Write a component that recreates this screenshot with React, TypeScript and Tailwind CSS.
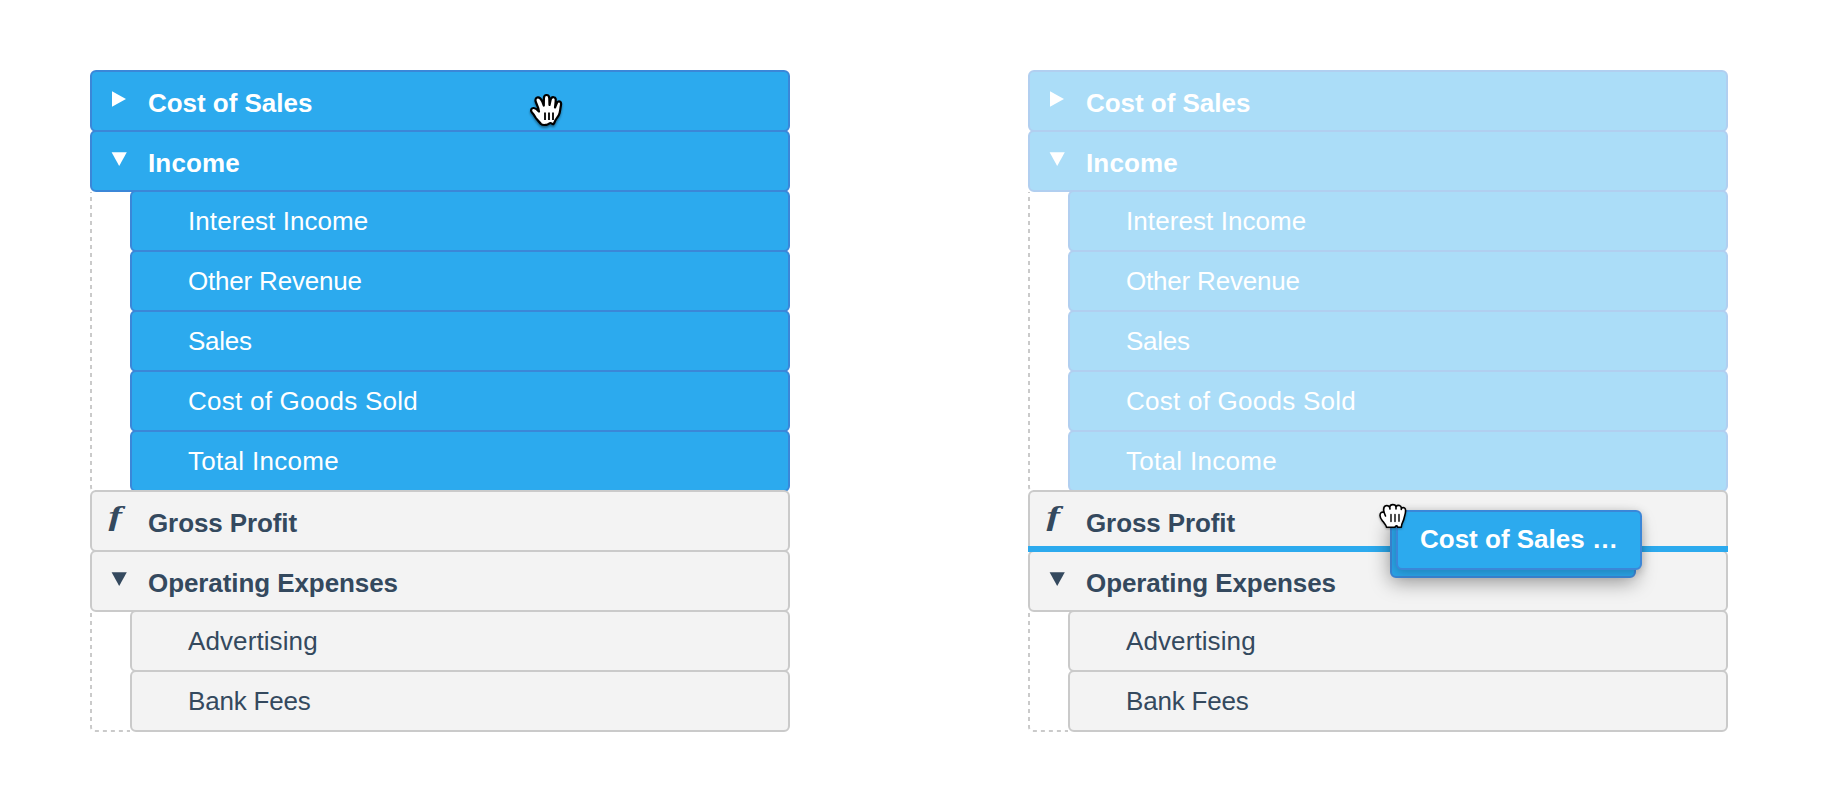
import React from "react";

type Tone = "selected" | "ghost" | "plain";
type Icon = "closed" | "open" | "formula";
type Label = { text: string; tracking: string };
type Item = { label: Label; icon: Icon; selected?: boolean; dashOffset?: number; children?: Label[] };

const ITEMS: Item[] = [
  { label: { text: "Cost of Sales", tracking: "tracking-[-0.03px]" }, icon: "closed", selected: true },
  {
    label: { text: "Income", tracking: "tracking-[0.15px]" },
    icon: "open",
    selected: true,
    dashOffset: 3,
    children: [
      { text: "Interest Income", tracking: "tracking-[0.08px]" },
      { text: "Other Revenue", tracking: "tracking-[-0.2px]" },
      { text: "Sales", tracking: "tracking-[-0.25px]" },
      { text: "Cost of Goods Sold", tracking: "tracking-[0.25px]" },
      { text: "Total Income", tracking: "tracking-[0.3px]" },
    ],
  },
  { label: { text: "Gross Profit", tracking: "tracking-[-0.1px]" }, icon: "formula" },
  {
    label: { text: "Operating Expenses", tracking: "tracking-[-0.08px]" },
    icon: "open",
    dashOffset: 7,
    children: [
      { text: "Advertising", tracking: "tracking-[0.1px]" },
      { text: "Bank Fees", tracking: "tracking-[-0.18px]" },
    ],
  },
];

const TONES: Record<Tone, string> = {
  selected: "border-[#3b87d8] bg-[#2caaee] text-white",
  ghost: "border-[#b1cff0] bg-[#abddf8] text-white",
  plain: "border-[#cacaca] bg-[#f3f3f3] text-[#34495e]",
};

function RowIcon({ icon }: { icon: Icon }) {
  return (
    <svg className="h-[58px] w-14 shrink-0" viewBox="0 0 56 58" fill="currentColor">
      {icon === "closed" && <path d="M20 19.3V34.7L34 27Z" />}
      {icon === "open" && <path d="M19.6 20.3H34.8L27.2 34Z" />}
      {icon === "formula" && (
        <text
          transform="translate(16.5 33) scale(1.45 1)"
          fontFamily="Liberation Serif, serif"
          fontSize="28"
          fontWeight="bold"
          fontStyle="italic"
        >
          f
        </text>
      )}
    </svg>
  );
}

function HeaderRow({ label, icon, tone }: { label: Label; icon: Icon; tone: Tone }) {
  return (
    <div className={`flex h-[62px] items-center rounded-md border-2 ${TONES[tone]}`}>
      <RowIcon icon={icon} />
      <span className={`pt-1 text-[26px] leading-[30px] font-bold whitespace-nowrap ${label.tracking}`}>
        {label.text}
      </span>
    </div>
  );
}

function ChildRow({ label, tone }: { label: Label; tone: Tone }) {
  return (
    <li className={`flex h-[62px] items-center rounded-md border-2 pl-14 text-[26px] leading-[30px] ${TONES[tone]}`}>
      <span className={label.tracking}>{label.text}</span>
    </li>
  );
}

function Gutter({ rows, dashOffset }: { rows: number; dashOffset: number }) {
  const height = rows * 60;
  return (
    <svg className="w-10 shrink-0 self-end" height={height} viewBox={`0 0 40 ${height}`} fill="none">
      <path
        d={`M1 0V${height - 5}a4 4 0 0 0 4 4H40`}
        stroke="#cacaca"
        strokeWidth="2"
        strokeDasharray="4 4"
        strokeDashoffset={dashOffset}
      />
    </svg>
  );
}

function Tree({ dragging = false, children }: { dragging?: boolean; children?: React.ReactNode }) {
  return (
    <div className="relative w-[700px]">
      <ul className="flex flex-col -space-y-0.5">
        {ITEMS.map((item) => {
          const tone: Tone = item.selected ? (dragging ? "ghost" : "selected") : "plain";
          return (
            <li key={item.label.text} className="relative flex flex-col -space-y-0.5">
              <HeaderRow label={item.label} icon={item.icon} tone={tone} />
              {item.children && (
                <div className="flex">
                  <Gutter rows={item.children.length} dashOffset={item.dashOffset ?? 0} />
                  <ul className="flex grow flex-col -space-y-0.5">
                    {item.children.map((c) => (
                      <ChildRow key={c.text} label={c} tone={tone} />
                    ))}
                  </ul>
                </div>
              )}
            </li>
          );
        })}
      </ul>
      {children}
    </div>
  );
}

function OpenHand() {
  return (
    <svg
      className="absolute top-[22px] left-[438px] h-[38px] w-9 drop-shadow-[0_2px_1px_rgba(0,0,0,0.4)]"
      viewBox="0 0 36 38"
      fill="#fff"
      stroke="#000"
      strokeWidth="2.2"
      strokeLinejoin="round"
      strokeLinecap="round"
    >
      <path d="M13 32C11 29.500 9 28 7.500 25.500C6.500 23.500 5.500 22 3.800 20.200C2.200 18.200 3.400 15.800 5.800 16C8 16.300 9.500 18 11 19.500C10.800 16.500 9.300 13.500 8 10.500C6.800 7.800 7.600 5.600 9.800 5.300C12.300 5 13.300 7.200 14.300 9.500L15.800 13.500L15.900 6.500C15.900 4.300 17 3 18.500 3C20.200 3 21.300 4.300 21.300 6.500L21.500 13L22.700 7.500C23.300 5.600 24.500 4.900 25.900 5.300C27.500 5.700 28 7.200 27.700 9L27 15.500L28.600 11.500C29.400 9.600 30.600 9 31.800 9.500C33.300 10.200 33.300 11.800 32.900 13.500C32.300 16.500 32.300 18 31.600 21C30.900 24 29 25.500 27.600 28C26.500 30 26.500 31 25.500 32C24.500 33 23.700 31 22.500 31C21 31 20.500 32.500 18.500 32.800C16.500 33 14.500 33.500 13 32Z" />
      <path d="M17 20.500V28M21 20.500V28M25 20.500V28" fill="none" strokeWidth="1.800" strokeLinecap="butt" />
    </svg>
  );
}

function ClosedHand() {
  return (
    <svg
      className="absolute -top-2.5 -left-3.5 h-[34px] w-9 drop-shadow-[0_1px_1px_rgba(0,0,0,0.3)]"
      viewBox="0 0 36 34"
      fill="#fff"
      stroke="#000"
      strokeWidth="1.6"
      strokeLinejoin="round"
      strokeLinecap="round"
    >
      <path d="M10.500 27.200C10.300 25 8.500 23.500 7 21.500C5.500 19.500 4 18 4 15.500C4 12.800 5.500 11.800 8 12.300C7.300 9 7.500 6.500 9.800 5.800C11.500 5.300 12.800 6 13.600 7C14 5.300 15 4.600 16.800 4.600C18.500 4.600 19.600 5.300 20 6.500C21 5.300 22.300 5.200 23.500 5.500C24.800 5.900 25.300 6.800 25.400 8C28 7 29.500 8 29.600 10.500C29.700 13.500 28.500 16 28 18.500C27.500 21.500 25.500 22.500 25.300 27.300H21.800C21.300 25.500 19.800 25.300 18.800 27.300H10.500Z" />
      <path d="M8 12.300L9.500 16M13.600 7L14 9M20 6.500V9M25.400 8L25.300 9.500" fill="none" />
      <path d="M15 14.500V21.500M19 14.500V21.500M23 14.500V21.300" fill="none" strokeWidth="1.400" />
    </svg>
  );
}

function DragPreview() {
  return (
    <div className="absolute top-[440px] left-[362px] grid">
      <div className="col-start-1 row-start-1 mt-2 mr-1.5 rounded-md border-2 border-[#3a83d0] bg-[#29a2e4] shadow-[0_4px_20px_rgba(0,0,0,0.4)]" />
      <div className="relative col-start-1 row-start-1 mb-2 ml-1.5 flex h-[60px] w-[246px] items-center rounded-md border-2 border-[#3b87d8] bg-[#2caaee] pl-[22px] text-[26px] leading-[30px] font-bold whitespace-nowrap text-white shadow-[0_2px_10px_rgba(0,0,0,0.2)]">
        <span className="pb-0.5">Cost of Sales …</span>
      </div>
      <ClosedHand />
    </div>
  );
}

export default function App() {
  return (
    <main className="flex h-[812px] w-[1844px] gap-[238px] bg-white pt-[70px] pl-[90px] font-['Liberation_Sans',Arial,sans-serif]">
      <Tree>
        <OpenHand />
      </Tree>
      <Tree dragging>
        <div className="absolute inset-x-0 top-[476px] h-1.5 bg-[#2caaee]" />
        <DragPreview />
      </Tree>
    </main>
  );
}
